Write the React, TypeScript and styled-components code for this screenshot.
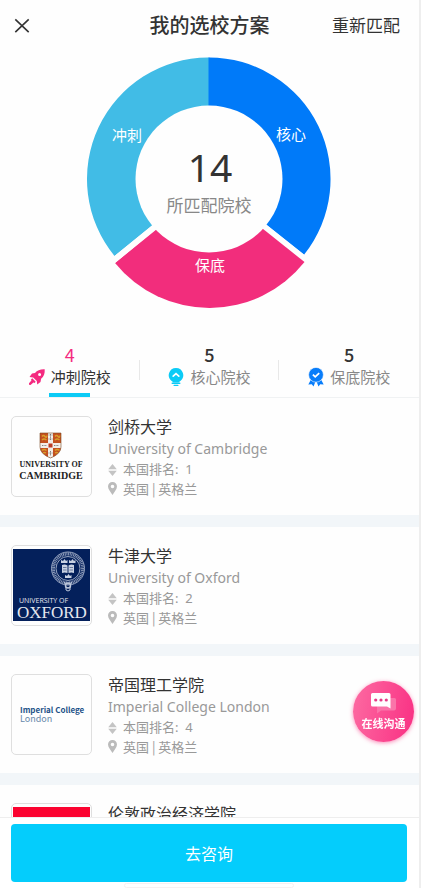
import React, { useState } from 'react';
import styled, { createGlobalStyle } from 'styled-components';

const fontStack = '"Noto Sans", "Noto Sans CJK SC", sans-serif';
const cjkStack = '"Noto Sans CJK SC", sans-serif';

const GlobalStyle = createGlobalStyle`
  * { box-sizing: border-box; }
  body { margin: 0; background: #fff; font-family: ${fontStack}; color: #333; }
  button { font-family: inherit; border: 0; background: none; padding: 0; color: inherit; cursor: pointer; }
  h1, h2, p, ul { margin: 0; padding: 0; font-weight: 400; }
  ul { list-style: none; }
`;

const Screen = styled.div`
  height: 100vh;
  display: flex;
  flex-direction: column;
  background: #fefefe;
  border-right: 2px solid #eeeeee;
`;

const Header = styled.header`
  flex: none;
  display: grid;
  grid-template-columns: 1fr auto 1fr;
  align-items: center;
  height: 52px;
  padding: 0 14px;
`;

const CloseButton = styled.button`
  justify-self: start;
  display: flex;
`;

const Title = styled.h1`
  font-size: 20px;
  font-weight: 500;
  line-height: 28px;
`;

const RematchButton = styled.button`
  justify-self: end;
  padding-right: 5px;
  font-size: 17px;
  line-height: 24px;
`;

const ChartArea = styled.section`
  flex: none;
  display: flex;
  justify-content: center;
  height: 292px;
`;

const Tabs = styled.div`
  flex: none;
  display: grid;
  grid-template-columns: repeat(3, 1fr);
  height: 54px;
  border-bottom: 1px solid #f0f2f3;
`;

const Tab = styled.button<{ $active: boolean }>`
  position: relative;
  display: flex;
  flex-direction: column;
  align-items: center;
  color: ${(p) => (p.$active ? '#333' : '#888')};

  &:not(:first-child)::before {
    content: '';
    position: absolute;
    left: -1px;
    top: 16px;
    width: 1px;
    height: 20px;
    background: #e8e8e8;
  }

  &::after {
    content: '';
    position: absolute;
    bottom: 0;
    width: 41px;
    height: 4px;
    background: ${(p) => (p.$active ? '#0ccbf6' : 'transparent')};
  }
`;

const TabCount = styled.span<{ $active: boolean }>`
  font-family: ${cjkStack};
  font-size: 18px;
  line-height: 20px;
  font-weight: ${(p) => (p.$active ? 400 : 500)};
  color: ${(p) => (p.$active ? '#f42a80' : '#333')};
`;

const TabLabel = styled.span`
  display: flex;
  align-items: center;
  gap: 6px;
  font-size: 15px;
  line-height: 26px;
`;

const List = styled.ul`
  flex: 1;
  min-height: 0;
  overflow-y: auto;
  scrollbar-width: none;
`;

const Card = styled.li`
  display: flex;
  gap: 16px;
  padding: 18px 11px;
  border-bottom: 12px solid #f2f6f9;
`;

const LogoBox = styled.div`
  flex: none;
  display: flex;
  align-items: center;
  justify-content: center;
  width: 81px;
  height: 81px;
  border: 1px solid #dfdfdf;
  border-radius: 5px;
  overflow: hidden;
`;

const Details = styled.div`
  display: flex;
  flex-direction: column;
  height: 81px;
  white-space: nowrap;
`;

const Name = styled.h2`
  font-size: 16px;
  line-height: 22px;
`;

const EnglishName = styled.p`
  font-size: 14px;
  line-height: 22px;
  color: #999;
`;

const Meta = styled.p`
  display: flex;
  align-items: center;
  gap: 6px;
  font-size: 13px;
  line-height: 19px;
  color: #999;
`;

const Place = styled(Meta)`
  font-family: ${cjkStack};
`;

const Footer = styled.footer`
  flex: none;
  display: flex;
  flex-direction: column;
  align-items: center;
  gap: 1px;
  height: 71px;
  padding: 6px 12px 0 11px;
  border-top: 1px solid #eee;
  background: #fff;
`;

const ConsultButton = styled.button`
  width: 100%;
  height: 58px;
  border-radius: 4px;
  background: #04cdfc;
  color: #fff;
  font-size: 16px;
`;

const HomeIndicator = styled.div`
  width: 170px;
  height: 5px;
  border: 1px solid #f6f1f1;
  border-radius: 3px;
`;

const ChatButton = styled.button`
  position: fixed;
  right: 7px;
  bottom: 146px;
  display: flex;
  flex-direction: column;
  align-items: center;
  width: 61px;
  height: 61px;
  padding-top: 12px;
  border-radius: 50%;
  background: linear-gradient(100deg, #fd6ba2, #f92f83);
  box-shadow: 0 1px 4px rgba(250, 50, 130, 0.55);
  color: #fff;
  font-size: 11px;
  font-weight: 600;
  line-height: 18px;
`;

function DonutChart() {
  return (
    <svg width="260" height="263" viewBox="80 52 260 263" role="img" aria-label="14 所匹配院校" fontFamily={fontStack} textAnchor="middle">
      <path d="M209.500 179V57.500H208A121.500 121.500 0 0 0 114.500 256Z" fill="#41bce6" />
      <path d="M208.500 179V57.500A121.500 121.500 0 0 1 304 254.800Z" fill="#007af9" />
      <path d="M209.500 186.500L304.500 262A121.500 121.500 0 0 1 115 263Z" fill="#f22d7c" />
      <path d="M209 185L305 261.500 304 254.500 209 179 114.500 256 115 263Z" fill="#fefefe" />
      <circle cx="209" cy="179" r="73.500" fill="#fefefe" />
      <g fill="#fff" fontSize="15">
        <text x="127" y="141">冲刺</text>
        <text x="291" y="140">核心</text>
        <text x="210" y="271">保底</text>
      </g>
      <text x="210" y="182" fontSize="39" fill="#333">14</text>
      <text x="209" y="212" fontSize="17" fill="#888">所匹配院校</text>
    </svg>
  );
}

function RocketIcon() {
  return (
    <svg width="16" height="16" viewBox="0 0 16 16" fill="#f42a80" aria-hidden="true">
      <path fillRule="evenodd" d="M15.700.2C11.500 0 8.300 1 6 4L3 4.500.5 8l3.700.4 3.600 3.600.4 3.600 3.300-2.600.6-3.200C14.900 7.600 16 4.500 15.700.2ZM10.600 3.900a1.500 1.500 0 1 1 0 3 1.500 1.500 0 0 1 0-3Z" />
      <path d="M3.300 9.300 6.700 12.700 5.600 14 4.400 13.600 1.600 16 0 15.800 0 14.200 2.400 11.600 2 10.500Z" />
    </svg>
  );
}

function BulbIcon() {
  return (
    <svg width="16" height="20" viewBox="0 0 16 20" aria-hidden="true">
      <path d="M8 1a7.200 7.200 0 0 1 4 13.200l-1.500 1.300h-5L4 14.200A7.200 7.200 0 0 1 8 1Z" fill="#0ccbf6" />
      <path d="M4.200 16.200h7.600M6.200 18.400h3.600" stroke="#0ccbf6" strokeWidth="1.400" strokeLinecap="round" />
      <path d="m5.200 9.200 2.800-2.500 2.800 2.500" fill="none" stroke="#fff" strokeWidth="1.700" strokeLinecap="round" />
    </svg>
  );
}

function RibbonIcon() {
  return (
    <svg width="16" height="20" viewBox="0 0 16 20" fill="#087dfa" aria-hidden="true">
      <path d="m3 12.500 4.500 2-2 5-1.700-2.200-3.500.3ZM13 12.500l-4.500 2 2 5 1.700-2.200 3.500.3Z" />
      <circle cx="8" cy="7.800" r="7.400" stroke="#fff" strokeWidth=".6" />
      <path d="m4.900 7.700 2.300 2.100 4-3.600" fill="none" stroke="#fff" strokeWidth="1.800" />
    </svg>
  );
}

function SortIcon() {
  return (
    <svg width="9" height="12" viewBox="0 0 9 12" fill="#c4c4c4" aria-hidden="true">
      <path d="M4.500 0 8.800 5.200H.2ZM4.500 12 8.800 6.800H.2Z" />
    </svg>
  );
}

function PinIcon() {
  return (
    <svg width="9" height="13" viewBox="0 0 9 13" fill="#bbb" aria-hidden="true">
      <path fillRule="evenodd" d="M4.500 0A4.400 4.400 0 0 1 9 4.400C9 7.500 6 10 4.500 13 3 10 0 7.500 0 4.400A4.400 4.400 0 0 1 4.500 0Zm0 2.700a1.800 1.800 0 1 0 0 3.600 1.800 1.800 0 0 0 0-3.600Z" />
    </svg>
  );
}

function ChatIcon() {
  return (
    <svg width="28" height="22" viewBox="0 0 28 22" aria-hidden="true">
      <path d="M9 5h15.500q1.500 0 1.500 1.500v9q0 2-2 2H11l-4 3V7Z" fill="#fa74a9" />
      <path d="M2.500 0H19q1.500 0 1.500 1.500V15.500L17 13.500H2.500Q1 13.500 1 12V1.500Q1 0 2.500 0Z" fill="#fff" />
      <g fill="#e63b86"><circle cx="5.700" cy="7" r="1.600" /><circle cx="11" cy="7" r="1.600" /><circle cx="16.300" cy="7" r="1.600" /></g>
    </svg>
  );
}

function CambridgeLogo() {
  return (
    <svg width="79" height="79" viewBox="0 0 79 79" role="img" aria-label="University of Cambridge">
      <path d="M28 16H49V30Q49 37 38.500 41 28 37 28 30Z" fill="#c4501f" />
      <path d="M36 16h5v24l-2.500 1-2.500-1ZM28 26h21v5H28Z" fill="#f3eee8" />
      <path d="M36.500 18h4M38.500 17v6M38.500 34v5M30 28.500h5M42 28.500h5M36.500 22h4M36.500 36h4" stroke="#555" strokeWidth=".7" strokeDasharray="1 .6" />
      <path d="M36.500 26.500h4v4h-4Z" fill="#bd3c26" />
      <g fill="none" stroke="#d8a02c" strokeWidth="1.400">
        <path d="M30 19.500q1.500-2 3 0t2-1M30 23q2-2 4.500 0M43 19.500q1.500-2 3 0t2-1M43 23q2-2 4.500 0M30 33.500q2-2 4.500 0M31 36q1.500-1 3 0M43 33.500q2-2 4.500 0M43 36q1.500-1 3 0" />
      </g>
      <path d="M28 16H49V30Q49 37 38.500 41 28 37 28 30Z" fill="none" stroke="#7a4a26" strokeWidth=".6" />
      <g fill="#222" fontFamily='"Liberation Serif", serif' fontWeight="700" textAnchor="middle">
        <text x="39" y="50" fontSize="8">UNIVERSITY OF</text>
        <text x="39" y="62" fontSize="10">CAMBRIDGE</text>
      </g>
    </svg>
  );
}

function OxfordLogo() {
  return (
    <svg width="79" height="79" viewBox="0 0 79 79" role="img" aria-label="University of Oxford">
      <path d="M1 3H78V75H1Z" fill="#04205b" />
      <g fill="none" stroke="#bcc6da">
        <circle cx="56" cy="22.500" r="14.500" strokeWidth="3" strokeDasharray="1 .7" opacity=".75" />
        <circle cx="56" cy="22.500" r="16.500" strokeWidth=".8" />
        <circle cx="56" cy="22.500" r="12" strokeWidth=".8" />
        <circle cx="56" cy="39.500" r="2.500" strokeWidth="1.500" />
        <path d="M52 36q4 4 8 0M54 41v3q2 2 4 0v-3" />
      </g>
      <path d="M50 19q3-1 5.500.5V27q-3-1-5.500 0ZM62 19q-3-1-5.500.5V27q3-1 5.500 0Z" fill="#c8d1e2" />
      <path d="m49 17 0-3 2 1 1.500-2 1.500 2 1.500-1v3ZM57 17v-3l2 1 1.500-2 1.500 2 1.500-1v3ZM53 32l0-3 2 1 1.500-2 1.500 2 1.500-1v3Z" fill="#c8d1e2" />
      <path d="M51 21.500h3.500M51 24h3.500M57.500 21.500H61M57.500 24H61" stroke="#415581" strokeWidth=".7" />
      <g fill="#e4e8f0">
        <text x="7" y="57" fontSize="7" fontFamily='"Open Sans", sans-serif'>UNIVERSITY OF</text>
        <text x="5" y="72" fontSize="17" fontFamily='"Liberation Serif", serif'>OXFORD</text>
      </g>
    </svg>
  );
}

function ImperialLogo() {
  return (
    <svg width="79" height="79" viewBox="0 0 79 79" role="img" aria-label="Imperial College London" fontFamily={cjkStack}>
      <text x="8" y="38" fill="#1d5288" fontSize="8" fontWeight="700">Imperial College</text>
      <text x="8" y="47" fill="#6788ab" fontSize="9">London</text>
    </svg>
  );
}

function LseLogo() {
  return (
    <svg width="79" height="79" viewBox="0 0 79 79" role="img" aria-label="LSE">
      <path d="M1 3H78V75H1Z" fill="#fb0330" />
    </svg>
  );
}

interface School {
  name: string;
  english?: string;
  rank?: number;
  place?: string;
  logo: React.ReactNode;
}

const tabs = [
  { label: '冲刺院校', count: 4, icon: <RocketIcon /> },
  { label: '核心院校', count: 5, icon: <BulbIcon /> },
  { label: '保底院校', count: 5, icon: <RibbonIcon /> },
];

const schools: School[] = [
  { name: '剑桥大学', english: 'University of Cambridge', rank: 1, place: '英国 | 英格兰', logo: <CambridgeLogo /> },
  { name: '牛津大学', english: 'University of Oxford', rank: 2, place: '英国 | 英格兰', logo: <OxfordLogo /> },
  { name: '帝国理工学院', english: 'Imperial College London', rank: 4, place: '英国 | 英格兰', logo: <ImperialLogo /> },
  { name: '伦敦政治经济学院', logo: <LseLogo /> },
];

export default function App() {
  const [active, setActive] = useState(0);
  return (
    <Screen>
      <GlobalStyle />
      <Header>
        <CloseButton aria-label="关闭">
          <svg width="16" height="16" viewBox="0 0 16 16" stroke="#333" strokeWidth="1.600" aria-hidden="true">
            <path d="M1.300 1.300 14.700 14.200M14.700 1.300 1.300 14.200" />
          </svg>
        </CloseButton>
        <Title>我的选校方案</Title>
        <RematchButton>重新匹配</RematchButton>
      </Header>
      <ChartArea>
        <DonutChart />
      </ChartArea>
      <Tabs role="tablist">
        {tabs.map((tab, i) => (
          <Tab key={tab.label} role="tab" aria-selected={i === active} $active={i === active} onClick={() => setActive(i)}>
            <TabCount $active={i === active}>{tab.count}</TabCount>
            <TabLabel>{tab.icon}{tab.label}</TabLabel>
          </Tab>
        ))}
      </Tabs>
      <List>
        {schools.map((school) => (
          <Card key={school.name}>
            <LogoBox>{school.logo}</LogoBox>
            <Details>
              <Name>{school.name}</Name>
              {school.english && <EnglishName>{school.english}</EnglishName>}
              {school.rank && <Meta><SortIcon />本国排名:&nbsp; {school.rank}</Meta>}
              {school.place && <Place><PinIcon />{school.place}</Place>}
            </Details>
          </Card>
        ))}
      </List>
      <Footer>
        <ConsultButton>去咨询</ConsultButton>
        <HomeIndicator />
      </Footer>
      <ChatButton>
        <ChatIcon />
        在线沟通
      </ChatButton>
    </Screen>
  );
}
